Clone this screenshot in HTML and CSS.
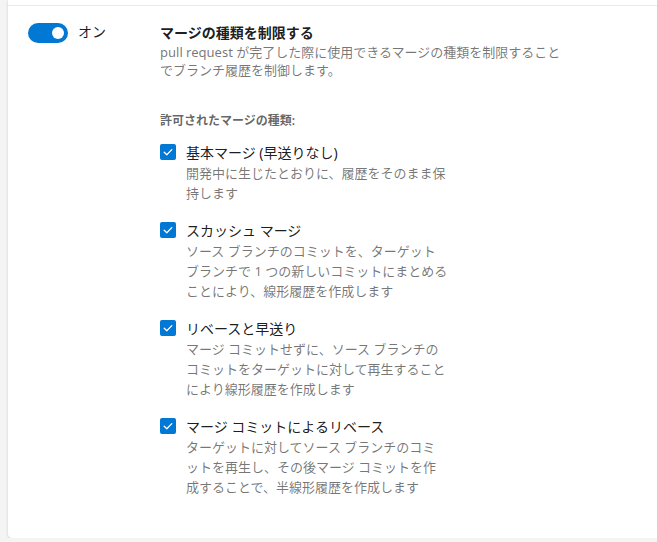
FILE: index.html
```html
<!DOCTYPE html>
<html lang="ja">
<head>
<meta charset="utf-8">
<link rel="stylesheet" href="styles.css">
</head>
<body>
<div class="card">
  <div class="row">
    <div class="toggle-col">
      <span class="toggle"><span class="knob"></span></span>
      <span class="toggle-label">オン</span>
    </div>
    <div class="content">
      <div class="title">マージの種類を制限する</div>
      <div class="desc">pull request が完了した際に使用できるマージの種類を制限することでブランチ履歴を制御します。</div>
      <div class="subhead">許可されたマージの種類:</div>
      <div class="options">
        <div class="option">
          <span class="check"><svg viewBox="0 0 16 16" width="16" height="16"><path d="M4.2 8.3 L6.8 10.8 L11.8 5.6" fill="none" stroke="#fff" stroke-width="1.3" stroke-linecap="round" stroke-linejoin="round"/></svg></span>
          <div class="opt-text">
            <div class="opt-label">基本マージ (早送りなし)</div>
            <div class="opt-desc">開発中に生じたとおりに、履歴をそのまま保持します</div>
          </div>
        </div>
        <div class="option">
          <span class="check"><svg viewBox="0 0 16 16" width="16" height="16"><path d="M4.2 8.3 L6.8 10.8 L11.8 5.6" fill="none" stroke="#fff" stroke-width="1.3" stroke-linecap="round" stroke-linejoin="round"/></svg></span>
          <div class="opt-text">
            <div class="opt-label">スカッシュ マージ</div>
            <div class="opt-desc">ソース ブランチのコミットを、ターゲット ブランチで 1 つの新しいコミットにまとめることにより、線形履歴を作成します</div>
          </div>
        </div>
        <div class="option">
          <span class="check"><svg viewBox="0 0 16 16" width="16" height="16"><path d="M4.2 8.3 L6.8 10.8 L11.8 5.6" fill="none" stroke="#fff" stroke-width="1.3" stroke-linecap="round" stroke-linejoin="round"/></svg></span>
          <div class="opt-text">
            <div class="opt-label">リベースと早送り</div>
            <div class="opt-desc">マージ コミットせずに、ソース ブランチのコミットをターゲットに対して再生することにより線形履歴を作成します</div>
          </div>
        </div>
        <div class="option">
          <span class="check"><svg viewBox="0 0 16 16" width="16" height="16"><path d="M4.2 8.3 L6.8 10.8 L11.8 5.6" fill="none" stroke="#fff" stroke-width="1.3" stroke-linecap="round" stroke-linejoin="round"/></svg></span>
          <div class="opt-text">
            <div class="opt-label">マージ コミットによるリベース</div>
            <div class="opt-desc">ターゲットに対してソース ブランチのコミットを再生し、その後マージ コミットを作成することで、半線形履歴を作成します</div>
          </div>
        </div>
      </div>
    </div>
  </div>
</div>
</body>
</html>
```

FILE: styles.css
```css
html, body {
  margin: 0;
  padding: 0;
  background: #f4f4f4;
  font-family: "Noto Sans", "Noto Sans CJK JP", sans-serif;
  overflow: hidden;
}
.card {
  margin-left: 8px;
  width: calc(100vw - 8px);
  height: 538px;
  box-sizing: border-box;
  background: #fff;
  padding-top: 5px;
  border-radius: 0 0 0 4px;
  box-shadow: 0 1px 3px rgba(0,0,0,0.14), 0 0 1px rgba(0,0,0,0.1);
}
.row {
  border-top: 1px solid #ebebeb;
  display: flex;
  padding: 16px 0 0 20px;
}
.toggle-col {
  width: 132px;
  display: flex;
  align-items: flex-start;
  gap: 10px;
}
.toggle {
  width: 40px;
  height: 20px;
  border-radius: 10px;
  background: #0078d4;
  display: flex;
  align-items: center;
  justify-content: flex-end;
  box-sizing: border-box;
  padding-right: 4px;
  margin-top: 1px;
}
.knob {
  width: 12px;
  height: 12px;
  border-radius: 50%;
  background: #fff;
}
.toggle-label {
  font-size: 14px;
  line-height: 20px;
  color: rgba(0,0,0,0.9);
}
.content {
  width: 412px;
}
.title {
  font-size: 14px;
  font-weight: 700;
  line-height: 20px;
  color: rgba(0,0,0,0.9);
  margin-top: 1px;
}
.desc {
  font-size: 13px;
  line-height: 18px;
  color: rgba(0,0,0,0.55);
}
.subhead {
  margin-top: 34px;
  font-size: 12px;
  font-weight: 600;
  line-height: 16px;
  color: rgba(0,0,0,0.62);
}
.options {
  margin-top: 14px;
  display: flex;
  flex-direction: column;
  gap: 18px;
}
.option {
  display: flex;
  gap: 10px;
}
.check {
  width: 16px;
  height: 16px;
  border-radius: 2px;
  background: #0078d4;
  flex: none;
  margin-top: 1px;
  display: block;
}
.check svg { display: block; }
.opt-text {
  width: 262px;
}
.opt-label {
  font-size: 14px;
  line-height: 20px;
  color: rgba(0,0,0,0.9);
}
.opt-desc {
  font-size: 13px;
  line-height: 20px;
  color: rgba(0,0,0,0.55);
}
```
